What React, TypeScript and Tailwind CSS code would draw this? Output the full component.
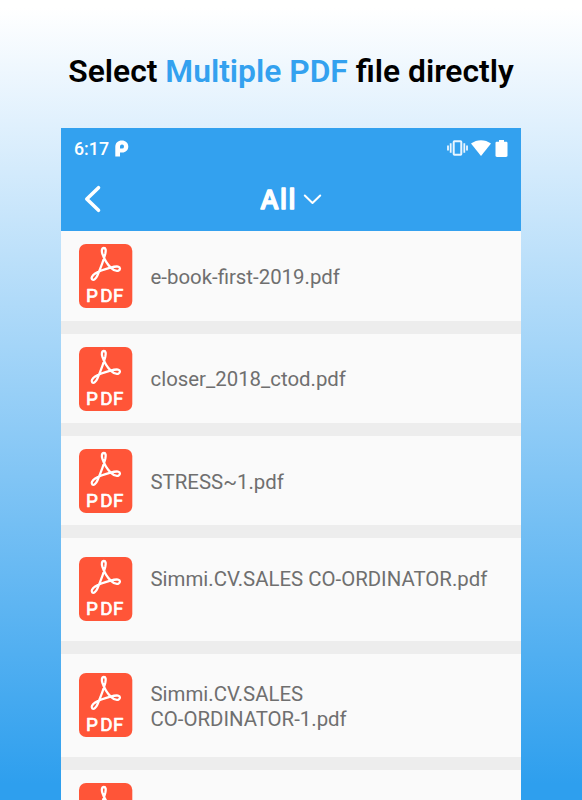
"use client";

type PdfFile = {
  name: string;
  tall?: boolean;
};

const files: PdfFile[] = [
  { name: "e-book-first-2019.pdf" },
  { name: "closer_2018_ctod.pdf" },
  { name: "STRESS~1.pdf" },
  { name: "Simmi.CV.SALES CO-ORDINATOR.pdf", tall: true },
  { name: "Simmi.CV.SALES\nCO-ORDINATOR-1.pdf", tall: true },
];

function PdfIcon({ label = true }: { label?: boolean }) {
  return (
    <svg
      width="54"
      height="64"
      viewBox="0 0 54 64"
      fill="none"
      className="block shrink-0"
    >
      <rect x="0" y="0" width="53.3" height="64" rx="7" fill="#ff5538" />
      <path
        d="M24.9 4C22.500 4 22.600 7.500 23.400 9.800C25 14.500 28 20 32 23.800C34.500 26.200 37.500 27.300 39.500 26.600C41.500 25.800 41.500 23 39 22.600C37 22.300 34 22.900 31.500 23.600C26.500 24.900 20.500 26.600 16.200 29.500C13.200 31.500 11.800 34 13.200 35.400C14.800 36.800 16.900 34.800 18.400 31.500C21 25.500 24.800 15.500 26.300 9.800C27.100 6 26.800 4 24.900 4Z"
        stroke="#fff"
        strokeWidth="2.3"
        strokeLinecap="round"
        strokeLinejoin="round"
      />
      {label && (
        <text
          x="7 21.2 34"
          y="58.4"
          fill="#fff"
          stroke="#fff"
          strokeWidth="0.7"
          strokeLinejoin="round"
          className="font-[Roboto,sans-serif] text-[18.8px] font-normal"
        >
          PDF
        </text>
      )}
    </svg>
  );
}

function StatusBar() {
  return (
    <div className="flex h-10 items-center pl-[13px] pr-[13.5px] text-white">
      <span className="pt-0.5 text-[17.8px] font-medium">6:17</span>
      <svg width="14" height="17" viewBox="0 0 14 17" className="ml-[6px]">
        <path
          fill="#fff"
          fillRule="evenodd"
          d="M.3 16.500V6.700C.3 2.700 3 .4 6.800.4c3.800 0 6.500 2.500 6.500 6s-2.600 6-6 6H5v4.100ZM5 8.500h1.800a2 2 0 1 0-1.800-2Z"
        />
      </svg>
      <svg
        width="21"
        height="16"
        viewBox="0 0 21 16"
        fill="none"
        stroke="#eaf6ff"
        strokeWidth="1.8"
        className="ml-auto"
      >
        <rect x="6.700" y="1.200" width="7.600" height="13.600" rx="0.700" strokeWidth="2" />
        <path d="M3.700 3.300v9.400M1 5.400v5.200M17.300 3.300v9.400M20 5.400v5.200" />
      </svg>
      <svg width="20" height="16" viewBox="0 0 20 16" className="ml-[3px]">
        <path fill="#fff" d="M0 3.600C6-1 14-1 20 3.600L10 16Z" />
      </svg>
      <svg width="13" height="17" viewBox="0 0 13 17" className="ml-[4px]">
        <path
          fill="#fff"
          d="M4 0h5v1.800h2c.9 0 1.500.5 1.500 1.200v12.800c0 .7-.6 1.200-1.500 1.200H2C1.100 17 .5 16.500.5 15.800V3c0-.7.6-1.200 1.500-1.200h2Z"
        />
      </svg>
    </div>
  );
}

function TitleBar() {
  return (
    <div className="grid h-[62px] grid-cols-[1fr_auto_1fr] items-center">
      <svg
        width="20"
        height="30"
        viewBox="0 0 20 30"
        fill="none"
        stroke="#fff"
        strokeWidth="3.6"
        strokeLinecap="round"
        strokeLinejoin="round"
        className="ml-[22px]"
      >
        <path d="M15.500 3.700L3.800 15L15.500 26.300" />
      </svg>
      <div className="flex items-center">
        <svg width="40" height="44" viewBox="0 0 40 44">
          <text
            x="0.800 19.800 28.200"
            y="32.300"
            fill="#fff"
            stroke="#fff"
            strokeWidth="1.300"
            strokeLinejoin="round"
            className="font-['Open_Sans',sans-serif] text-[26.500px] font-semibold"
          >
            All
          </text>
        </svg>
        <svg
          width="20"
          height="14"
          viewBox="0 0 20 14"
          fill="none"
          stroke="#fff"
          strokeWidth="2"
          strokeLinecap="round"
          strokeLinejoin="round"
          className="ml-[3px]"
        >
          <path d="M1.800 3.500L9.500 11L17.200 3.500" />
        </svg>
      </div>
    </div>
  );
}

function FileRow({ file }: { file: PdfFile }) {
  return (
    <div
      className={`flex border-b-[13px] border-[#ededed] pl-[18px] ${
        file.tall ? "h-[115.7px] pt-[19px]" : "h-[102.4px] pt-[13px]"
      }`}
    >
      <PdfIcon />
      <div
        className={`ml-[17.5px] whitespace-pre text-[20.4px] leading-[24.5px] text-[#6f6f6f] ${
          file.tall ? "pt-[9.3px]" : "pt-[20.5px]"
        }`}
      >
        {file.name}
      </div>
    </div>
  );
}

export default function App() {
  return (
    <div className="h-[800px] w-[582px] overflow-hidden bg-[linear-gradient(to_bottom,#ffffff_1%,#dff0fd_16%,#2e9fee_98%)] font-[Roboto,sans-serif]">
      <h1 className="flex h-[128px] items-center justify-center pt-[15px] text-[31.8px] font-semibold text-black">
        <span className="whitespace-pre">
          Select <span className="text-[#33a1ef]">Multiple PDF</span> file directly
        </span>
      </h1>
      <div className="mx-auto h-[672px] w-[460px] overflow-hidden bg-[#fafafa]">
        <div className="h-[103.3px] bg-[#33a1ef]">
          <StatusBar />
          <TitleBar />
        </div>
        {files.map((file) => (
          <FileRow key={file.name} file={file} />
        ))}
        {/* next row, only its top edge is on screen */}
        <div className="pl-[18px] pt-[13px]">
          <PdfIcon label={false} />
        </div>
      </div>
    </div>
  );
}
